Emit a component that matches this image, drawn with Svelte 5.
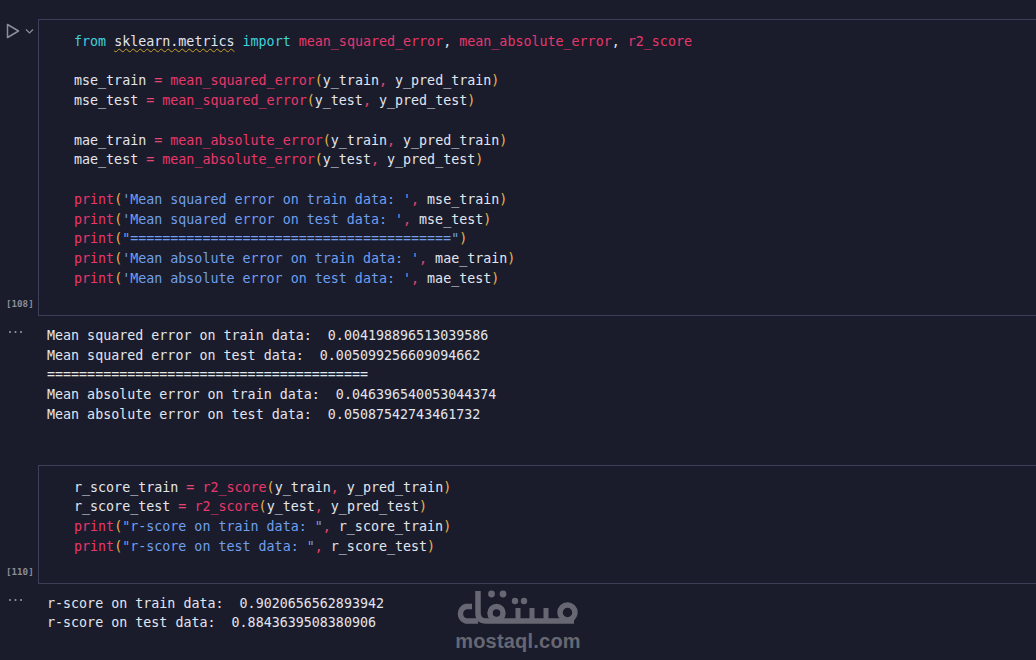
<script lang="ts">
  type Tok = [string, string];

  const code1: Tok[][] = [
    [['kw', 'from'], ['', ' '], ['squiggle', 'sklearn.metrics'], ['', ' '], ['kw', 'import'], ['', ' '], ['fn', 'mean_squared_error'], ['', ', '], ['fn', 'mean_absolute_error'], ['', ', '], ['fn', 'r2_score']],
    [],
    [['', 'mse_train '], ['op', '='], ['', ' '], ['fn', 'mean_squared_error'], ['par', '('], ['', 'y_train'], ['op', ','], ['', ' y_pred_train'], ['par', ')']],
    [['', 'mse_test '], ['op', '='], ['', ' '], ['fn', 'mean_squared_error'], ['par', '('], ['', 'y_test'], ['op', ','], ['', ' y_pred_test'], ['par', ')']],
    [],
    [['', 'mae_train '], ['op', '='], ['', ' '], ['fn', 'mean_absolute_error'], ['par', '('], ['', 'y_train'], ['op', ','], ['', ' y_pred_train'], ['par', ')']],
    [['', 'mae_test '], ['op', '='], ['', ' '], ['fn', 'mean_absolute_error'], ['par', '('], ['', 'y_test'], ['op', ','], ['', ' y_pred_test'], ['par', ')']],
    [],
    [['fn', 'print'], ['par', '('], ['str', "'Mean squared error on train data: '"], ['op', ','], ['', ' mse_train'], ['par', ')']],
    [['fn', 'print'], ['par', '('], ['str', "'Mean squared error on test data: '"], ['op', ','], ['', ' mse_test'], ['par', ')']],
    [['fn', 'print'], ['par', '('], ['str', '"========================================"'], ['par', ')']],
    [['fn', 'print'], ['par', '('], ['str', "'Mean absolute error on train data: '"], ['op', ','], ['', ' mae_train'], ['par', ')']],
    [['fn', 'print'], ['par', '('], ['str', "'Mean absolute error on test data: '"], ['op', ','], ['', ' mae_test'], ['par', ')']]
  ];

  const code2: Tok[][] = [
    [['', 'r_score_train '], ['op', '='], ['', ' '], ['fn', 'r2_score'], ['par', '('], ['', 'y_train'], ['op', ','], ['', ' y_pred_train'], ['par', ')']],
    [['', 'r_score_test '], ['op', '='], ['', ' '], ['fn', 'r2_score'], ['par', '('], ['', 'y_test'], ['op', ','], ['', ' y_pred_test'], ['par', ')']],
    [['fn', 'print'], ['par', '('], ['str', '"r-score on train data: "'], ['op', ','], ['', ' r_score_train'], ['par', ')']],
    [['fn', 'print'], ['par', '('], ['str', '"r-score on test data: "'], ['op', ','], ['', ' r_score_test'], ['par', ')']]
  ];

  const out1 = [
    'Mean squared error on train data:  0.004198896513039586',
    'Mean squared error on test data:  0.005099256609094662',
    '========================================',
    'Mean absolute error on train data:  0.046396540053044374',
    'Mean absolute error on test data:  0.05087542743461732'
  ];

  const out2 = [
    'r-score on train data:  0.9020656562893942',
    'r-score on test data:  0.8843639508380906'
  ];

  const cells = [
    { code: code1, count: '[108]', output: out1, run: true },
    { code: code2, count: '[110]', output: out2, run: false }
  ];
</script>

<main class="notebook">
  {#each cells as cell}
    <section class="cell">
      <div class="gutter">
        {#if cell.run}
          <div class="run">
            <svg width="30" height="18" viewBox="0 0 30 18" fill="none" stroke="#8b8d99">
              <path d="M2.500 2.500 L13.500 9 L2.500 15.500 Z" stroke-width="1.5" stroke-linejoin="round" />
              <path d="M21 7.500 L24.500 11 L28 7.500" stroke-width="1.2" />
            </svg>
          </div>
        {/if}
        <span class="count">{cell.count}</span>
      </div>
      <pre class="editor" class:first={cell.run}>{#each cell.code as line}<div class="line">{#each line as [cls, text]}<span class={cls}>{text}</span>{/each}{#if line.length === 0}&nbsp;{/if}</div>{/each}</pre>
    </section>
    <section class="output-row">
      <div class="more">
        <svg width="16" height="4" viewBox="0 0 16 4" fill="#9a9ca6">
          <circle cx="2" cy="2" r="1" /><circle cx="7.500" cy="2" r="1" /><circle cx="13" cy="2" r="1" />
        </svg>
      </div>
      <pre class="output">{#each cell.output as line}<div class="line">{line}</div>{/each}</pre>
    </section>
  {/each}

  <div class="watermark">
    <svg width="128" height="42" viewBox="454 590 128 42" fill="none" stroke="#666772" stroke-width="5.5">
      <path d="M472 606.500 H466 A7.500 7.500 0 0 0 466 621 H478" />
      <path d="M478 591 V613 Q478 621 486 621 H574" />
      <circle cx="496.500" cy="613" r="6.500" />
      <path d="M518 621 V608 M532 621 V608 M546 621 V608" stroke-width="5" />
      <circle cx="567.500" cy="612.500" r="7.500" />
      <g fill="#666772" stroke="none">
        <circle cx="491.500" cy="594" r="3.400" />
        <circle cx="503" cy="594" r="3.400" />
        <circle cx="515" cy="601" r="3.200" />
        <circle cx="524" cy="601" r="3.200" />
      </g>
    </svg>
    <span>mostaql.com</span>
  </div>
</main>

<style>
  :global(body) {
    background: #1a1c2c;
    overflow: hidden;
  }

  .notebook {
    position: relative;
    height: 660px;
    padding-top: 19px;
    box-sizing: border-box;
    overflow: hidden;
    font-family: "DejaVu Sans Mono", "Liberation Mono", monospace;
    font-size: 13.33px;
    color: #e2e5ec;
  }

  .cell {
    display: grid;
    grid-template-columns: 38px 1fr;
  }

  .gutter {
    display: flex;
    flex-direction: column;
    padding: 3px 0 6px 6px;
  }

  .run { height: 18px; margin-left: -1px; }

  .count {
    margin-top: auto;
    font-size: 9.2px;
    font-weight: 700;
    color: #8b8d99;
    line-height: 12px;
  }

  pre { margin: 0; font: inherit; }

  .line {
    height: 19.75px;
    line-height: 19.75px;
    white-space: pre;
  }

  .editor {
    border: 1px solid #3d3f58;
    border-right: none;
    padding: 12px 0 26px 35px;
  }

  .editor.first {
    padding-top: 11.75px;
    padding-bottom: 26.25px;
  }

  .output-row {
    display: grid;
    grid-template-columns: 47px 1fr;
    padding: 10px 0 40px;
  }

  .more {
    padding: 4px 0 0 8px;
    line-height: 0;
  }

  .kw { color: #3fd2dc; }
  .fn { color: #e8376a; }
  .op { color: #e8466f; }
  .par { color: #e8b54a; }
  .str { color: #6f9fee; }

  .squiggle {
    text-decoration: underline wavy #c9a227 1px;
    text-underline-offset: 2px;
  }

  .watermark {
    position: absolute;
    left: 454px;
    top: 590px;
    width: 128px;
    display: flex;
    flex-direction: column;
    align-items: center;
  }

  .watermark svg { display: block; }

  .watermark span {
    font-family: "Liberation Sans", Arial, sans-serif;
    font-weight: 700;
    font-size: 20px;
    line-height: 18px;
    letter-spacing: 0.2px;
    color: #666772;
    white-space: nowrap;
  }
</style>
